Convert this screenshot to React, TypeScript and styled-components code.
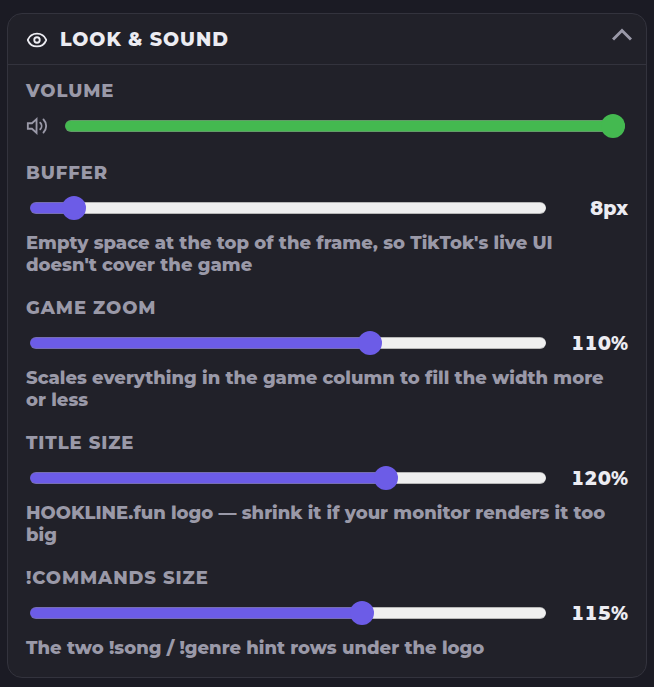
import { useState } from 'react';
import type { CSSProperties } from 'react';
import styled, { createGlobalStyle } from 'styled-components';
import { Eye } from 'lucide-react';

const GlobalStyle = createGlobalStyle`
  * { box-sizing: border-box; }
  body {
    margin: 0;
    background: #1b1b24;
    font-family: Montserrat, Inter, 'Open Sans', sans-serif;
    font-size: 18px;
    line-height: 22px;
    font-weight: 800;
    color: #9a99a8;
  }
`;

const Page = styled.main`
  padding: 13px 7px 9px;
`;

const Card = styled.section`
  border: 1px solid #33333d;
  border-radius: 15px;
  background: #212129;
`;

const Header = styled.button`
  display: flex;
  align-items: center;
  gap: 12px;
  width: 100%;
  height: 50px;
  padding: 13px 14px 12px 18px;
  border: 0;
  background: none;
  color: #ececf2;
  font: inherit;
  text-align: left;
  cursor: pointer;
`;

const Title = styled.span`
  flex: 1;
  font-size: 19px;
  line-height: 24px;
  letter-spacing: 0.05em;
`;

const Chevron = styled.svg<{ $open: boolean }>`
  align-self: flex-start;
  color: #9a99a8;
  transform: ${(p) => (p.$open ? 'none' : 'rotate(180deg)')};
`;

const Body = styled.div`
  display: flex;
  flex-direction: column;
  gap: 21px;
  padding: 15px 18px 18px;
  border-top: 1px solid #33333d;
`;

const Field = styled.div`
  display: flex;
  flex-direction: column;
  gap: 10px;
`;

const VolumeField = styled(Field)`
  padding-bottom: 1px;
`;

const Label = styled.label`
  letter-spacing: 0.05em;
`;

const SliderRow = styled.div`
  display: flex;
  align-items: center;
  gap: 24px;
  height: 28px;
  padding-left: 4px;
`;

const VolumeRow = styled(SliderRow)`
  gap: 17px;
  padding: 0 3px 0 0;
`;

const Slider = styled.input<{ $accent: string }>`
  appearance: none;
  flex: 1;
  min-width: 0;
  height: 24px;
  margin: 0;
  background: none;
  cursor: pointer;

  &::-webkit-slider-runnable-track {
    height: 12px;
    border: 1px solid rgba(128, 128, 128, 0.5);
    border-width: 1px 0;
    border-radius: 6px;
    background: linear-gradient(
        to right,
        ${(p) => p.$accent} var(--fill),
        #efefef var(--fill)
      )
      border-box;
  }
  &::-webkit-slider-thumb {
    appearance: none;
    width: 24px;
    height: 24px;
    margin-top: -7px;
    border: 0;
    border-radius: 50%;
    background: ${(p) => p.$accent};
  }
`;

const Value = styled.output`
  width: 58px;
  padding-top: 2px;
  color: #ececf2;
  font-size: 19px;
  line-height: 24px;
  font-variant-numeric: tabular-nums;
  text-align: right;
  white-space: nowrap;
`;

const Hint = styled.p`
  margin: 0;
`;

const settings = [
  { id: 'buffer', label: 'BUFFER', min: 0, max: 122, initial: 8, unit: 'px', hint: "Empty space at the top of the frame, so TikTok's live UI doesn't cover the game" },
  { id: 'zoom', label: 'GAME ZOOM', min: 50, max: 140, initial: 110, unit: '%', hint: 'Scales everything in the game column to fill the width more or less' },
  { id: 'title', label: 'TITLE SIZE', min: 50, max: 150, initial: 120, unit: '%', hint: 'HOOKLINE.fun logo — shrink it if your monitor renders it too big' },
  { id: 'commands', label: '!COMMANDS SIZE', min: 50, max: 150, initial: 115, unit: '%', hint: 'The two !song / !genre hint rows under the logo' },
];

type RangeProps = { id: string; min: number; max: number; value: number; accent: string; onChange: (v: number) => void };

function Range({ id, min, max, value, accent, onChange }: RangeProps) {
  const fill = `${((value - min) / (max - min)) * 100}%`;
  return (
    <Slider
      id={id}
      type="range"
      min={min}
      max={max}
      value={value}
      $accent={accent}
      style={{ '--fill': fill } as CSSProperties}
      onChange={(e) => onChange(Number(e.target.value))}
    />
  );
}

function SpeakerIcon() {
  return (
    <svg width="22" height="22" viewBox="0 0 24 24" fill="none" stroke="currentColor" strokeWidth="2" strokeLinecap="round" aria-hidden="true">
      <path d="M11.5 4.5 6.5 9H2v6h4.5l5 4.5z" />
      <path d="M15.54 8.46a5 5 0 0 1 0 7.07" />
      <path d="M19.07 4.93a10 10 0 0 1 0 14.14" />
    </svg>
  );
}

function Setting({ id, label, min, max, initial, unit, hint }: (typeof settings)[number]) {
  const [value, setValue] = useState(initial);
  return (
    <Field>
      <Label htmlFor={id}>{label}</Label>
      <SliderRow>
        <Range id={id} min={min} max={max} value={value} accent="#6c5ce7" onChange={setValue} />
        <Value htmlFor={id}>{value}{unit}</Value>
      </SliderRow>
      <Hint>{hint}</Hint>
    </Field>
  );
}

export default function App() {
  const [open, setOpen] = useState(true);
  const [volume, setVolume] = useState(100);
  return (
    <>
      <GlobalStyle />
      <Page>
        <Card>
          <Header type="button" aria-expanded={open} onClick={() => setOpen(!open)}>
            <Eye size={22} />
            <Title>LOOK &amp; SOUND</Title>
            <Chevron $open={open} width="20" height="14" viewBox="0 0 20 14" fill="none" stroke="currentColor" strokeWidth="3">
              <path d="M1 12.5 10 3.5l9 9" />
            </Chevron>
          </Header>
          {open && (
            <Body>
              <VolumeField>
                <Label htmlFor="volume">VOLUME</Label>
                <VolumeRow>
                  <SpeakerIcon />
                  <Range id="volume" min={0} max={100} value={volume} accent="#44b950" onChange={setVolume} />
                </VolumeRow>
              </VolumeField>
              {settings.map((s) => (
                <Setting key={s.id} {...s} />
              ))}
            </Body>
          )}
        </Card>
      </Page>
    </>
  );
}
